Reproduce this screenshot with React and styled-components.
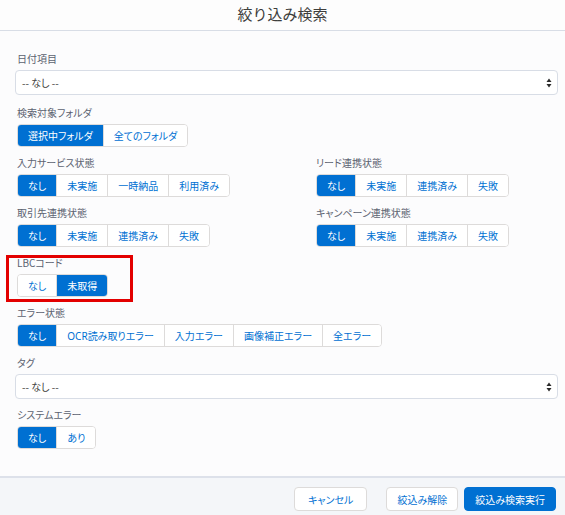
import React from "react";
import styled, { createGlobalStyle } from "styled-components";

const GlobalStyle = createGlobalStyle`
  html, body {
    margin: 0;
    padding: 0;
    background: #fcfcfd;
  }
  body {
    font-family: "Noto Sans", "Noto Sans CJK JP", sans-serif;
    font-feature-settings: "palt";
  }
`;

const Modal = styled.div`
  width: 565px;
  height: 515px;
  display: flex;
  flex-direction: column;
  background: #fcfcfd;
  overflow: hidden;
`;

const Header = styled.div`
  height: 30px;
  flex-shrink: 0;
  display: flex;
  justify-content: center;
  align-items: center;
  border-bottom: 1px solid #d8dde6;
  background: #fdfdfd;
`;

const Title = styled.div`
  font-size: 15px;
  line-height: 20px;
  color: #3e3e3c;
  font-family: "Noto Sans CJK JP", sans-serif;
  font-feature-settings: normal;
  margin-top: -3px;
`;

const Body = styled.div`
  flex: 1;
  padding: 21px 20px 0 16px;
`;

const Section = styled.div`
  position: relative;
  margin-bottom: ${(p) => (p.$extra ? "11px" : "9px")};
`;

const Marked = styled(Section)`
  &::after {
    content: "";
    position: absolute;
    left: -10px;
    top: -1px;
    width: 121px;
    height: 41px;
    border: 3px solid #e30000;
    pointer-events: none;
  }
`;

const Columns = styled.div`
  display: grid;
  grid-template-columns: 299px 1fr;
`;

const Label = styled.div`
  font-size: 10px;
  line-height: 14px;
  height: 14px;
  color: #5b6270;
  margin-bottom: 4px;
  padding-left: 1px;
  font-family: "Noto Sans CJK JP", sans-serif;
`;

const Select = styled.div`
  height: 23px;
  width: 530px;
  border: 1px solid #d8dde6;
  border-radius: 4px;
  background: #fff;
  display: flex;
  align-items: center;
  justify-content: space-between;
  padding: 0 5px 0 6px;
  box-sizing: content-box;
  margin-left: -1px;
  font-size: 10px;
  color: #3e3e3c;
  font-family: "Noto Sans CJK JP", sans-serif;
`;

const Arrows = styled.svg`
  width: 6px;
  height: 10px;
`;

const Group = styled.div`
  display: flex;
  width: fit-content;
  border: 1px solid #dddbda;
  border-radius: 4px;
  background: #fff;
  overflow: hidden;
  margin-left: 1px;
`;

const Seg = styled.div`
  height: 21px;
  padding: 0 10px;
  display: flex;
  align-items: center;
  font-size: 10px;
  font-family: "Noto Sans", "Noto Sans CJK JP", sans-serif;
  color: ${(p) => (p.$on ? "#fff" : "#0070d2")};
  background: ${(p) => (p.$on ? "#0070d2" : "#fff")};
  & + & {
    border-left: 1px solid #dddbda;
  }
`;

const Footer = styled.div`
  height: 39px;
  flex-shrink: 0;
  border-top: 2px solid #dde1ea;
  background: #f4f6f9;
  display: flex;
  justify-content: flex-end;
  align-items: flex-start;
  padding: 9px 9px 0 0;
  box-sizing: border-box;
  gap: 6px;
`;

const Button = styled.div`
  height: 22px;
  padding: 0 ${(p) => p.$pad || 10}px;
  display: flex;
  align-items: center;
  border: 1px solid ${(p) => (p.$primary ? "#0070d2" : "#dddbda")};
  border-radius: 4px;
  background: ${(p) => (p.$primary ? "#0070d2" : "#fff")};
  color: ${(p) => (p.$primary ? "#fff" : "#0070d2")};
  font-size: 10px;
  font-family: "Noto Sans CJK JP", sans-serif;
  margin-right: ${(p) => p.$gap || 0}px;
`;

const ButtonGroup = ({ items, active }) => (
  <Group>
    {items.map((t, i) => (
      <Seg key={t} $on={i === active}>
        {t}
      </Seg>
    ))}
  </Group>
);

const SelectBox = () => (
  <Select>
    <span>-- なし --</span>
    <Arrows viewBox="0 0 6 10">
      <path d="M3 0.5 L5.5 4 L0.5 4 Z" fill="#2b2b2b" />
      <path d="M3 9.5 L5.5 6 L0.5 6 Z" fill="#2b2b2b" />
    </Arrows>
  </Select>
);

const status4 = ["なし", "未実施", "連携済み", "失敗"];

export default function App() {
  return (
    <>
      <GlobalStyle />
      <Modal>
        <Header>
          <Title>絞り込み検索</Title>
        </Header>
        <Body>
          <Section $extra>
            <Label>日付項目</Label>
            <SelectBox />
          </Section>
          <Section>
            <Label>検索対象フォルダ</Label>
            <ButtonGroup items={["選択中フォルダ", "全てのフォルダ"]} active={0} />
          </Section>
          <Columns>
            <Section>
              <Label>入力サービス状態</Label>
              <ButtonGroup items={["なし", "未実施", "一時納品", "利用済み"]} active={0} />
            </Section>
            <Section>
              <Label>リード連携状態</Label>
              <ButtonGroup items={status4} active={0} />
            </Section>
            <Section>
              <Label>取引先連携状態</Label>
              <ButtonGroup items={status4} active={0} />
            </Section>
            <Section>
              <Label>キャンペーン連携状態</Label>
              <ButtonGroup items={status4} active={0} />
            </Section>
          </Columns>
          <Marked>
            <Label>LBCコード</Label>
            <ButtonGroup items={["なし", "未取得"]} active={1} />
          </Marked>
          <Section>
            <Label>エラー状態</Label>
            <ButtonGroup
              items={["なし", "OCR読み取りエラー", "入力エラー", "画像補正エラー", "全エラー"]}
              active={0}
            />
          </Section>
          <Section>
            <Label>タグ</Label>
            <SelectBox />
          </Section>
          <Section>
            <Label>システムエラー</Label>
            <ButtonGroup items={["なし", "あり"]} active={0} />
          </Section>
        </Body>
        <Footer>
          <Button $pad={13} $gap={13}>キャンセル</Button>
          <Button>絞込み解除</Button>
          <Button $primary>絞込み検索実行</Button>
        </Footer>
      </Modal>
    </>
  );
}
